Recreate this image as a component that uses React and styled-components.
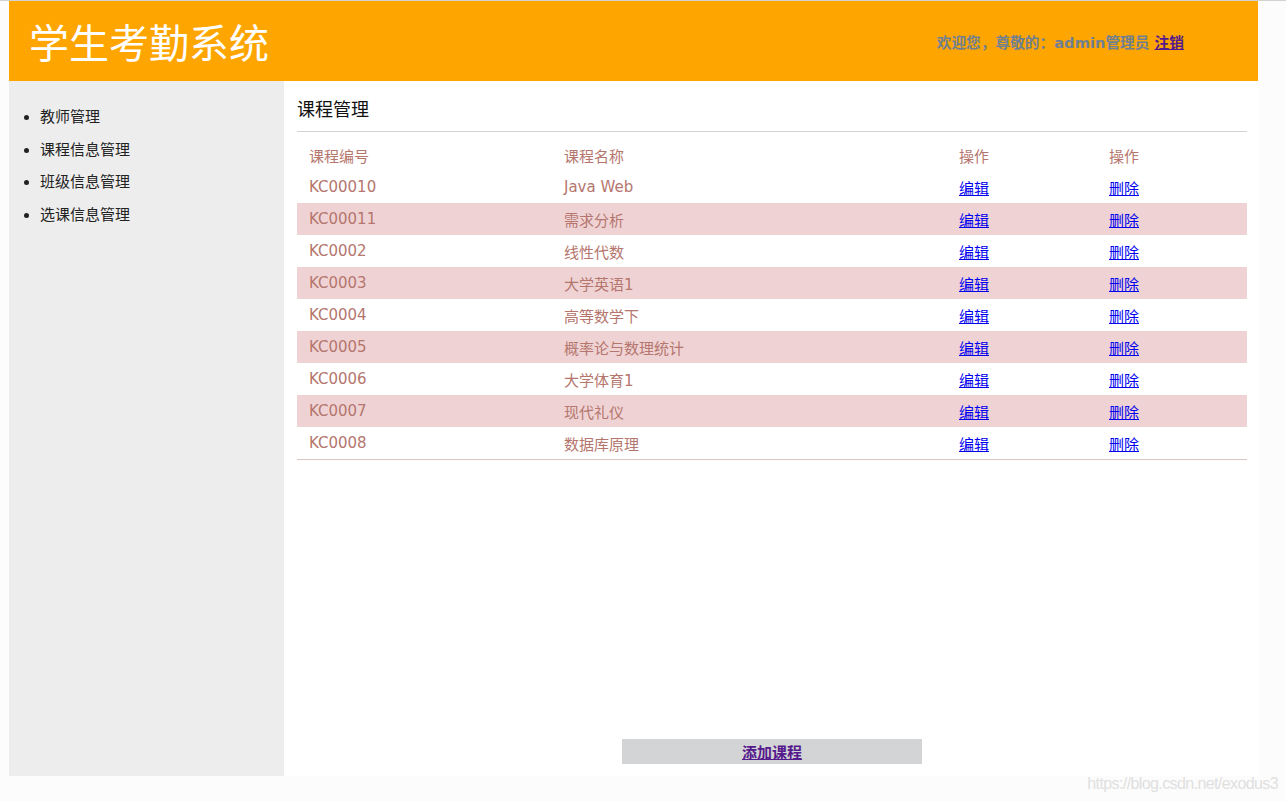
import React from 'react';
import styled, { createGlobalStyle } from 'styled-components';

const courses = [
  ['KC00010', 'Java Web'],
  ['KC00011', '需求分析'],
  ['KC0002', '线性代数'],
  ['KC0003', '大学英语1'],
  ['KC0004', '高等数学下'],
  ['KC0005', '概率论与数理统计'],
  ['KC0006', '大学体育1'],
  ['KC0007', '现代礼仪'],
  ['KC0008', '数据库原理'],
];

const menu = ['教师管理', '课程信息管理', '班级信息管理', '选课信息管理'];

const App = () => {
  return (
    <>
      <GlobalStyle />
      <Page>
        <Header>
          <Title>学生考勤系统</Title>
          <Welcome>
            欢迎您，尊敬的：admin管理员 <VisitedLink href="#">注销</VisitedLink>
          </Welcome>
        </Header>
        <Body>
          <Sidebar>
            <Menu>
              {menu.map((m) => (
                <MenuItem key={m}>{m}</MenuItem>
              ))}
            </Menu>
          </Sidebar>
          <Main>
            <PageTitle>课程管理</PageTitle>
            <Table>
              <colgroup>
                <col style={{ width: 255 }} />
                <col style={{ width: 395 }} />
                <col style={{ width: 150 }} />
                <col style={{ width: 150 }} />
              </colgroup>
              <thead>
                <tr>
                  <Th>课程编号</Th>
                  <Th>课程名称</Th>
                  <Th>操作</Th>
                  <Th>操作</Th>
                </tr>
              </thead>
              <tbody>
                {courses.map(([id, name], i) => (
                  <Row key={id} $striped={i % 2 === 1}>
                    <Td>{id}</Td>
                    <Td>{name}</Td>
                    <Td><ActionLink href="#">编辑</ActionLink></Td>
                    <Td><ActionLink href="#">删除</ActionLink></Td>
                  </Row>
                ))}
              </tbody>
            </Table>
            <Footer>
              <AddButton>
                <VisitedLink href="#">添加课程</VisitedLink>
              </AddButton>
            </Footer>
          </Main>
        </Body>
      </Page>
      <Watermark>https://blog.csdn.net/exodus3</Watermark>
    </>
  );
};

export default App;

const GlobalStyle = createGlobalStyle`
  html, body {
    margin: 0;
    padding: 0;
    background: #fcfcfc;
  }
  body {
    border-top: 1px solid #d2d2d2;
    font-family: "DejaVu Sans", "Noto Sans CJK SC", sans-serif;
    min-height: 800px;
    position: relative;
  }
`;

const Page = styled.div`
  width: 1249px;
  margin-left: 9px;
`;

const Header = styled.div`
  height: 80px;
  background: #ffa500;
  display: flex;
  align-items: center;
  justify-content: space-between;
  padding: 0 74px 0 20px;
  box-sizing: border-box;
`;

const Title = styled.h1`
  margin: 0;
  font-family: "Noto Sans CJK SC", sans-serif;
  font-weight: 400;
  font-size: 40px;
  line-height: 1;
  color: #fff;
`;

const Welcome = styled.div`
  font-size: 14.7px;
  font-weight: bold;
  color: #708090;
  margin-top: 1px;
`;

const VisitedLink = styled.a`
  color: #551a8b;
  text-decoration: underline;
  font-weight: bold;
`;

const Body = styled.div`
  display: flex;
  height: 695px;
`;

const Sidebar = styled.div`
  flex: 0 0 275px;
  background: #ededed;
`;

const Menu = styled.ul`
  margin: 0;
  padding: 20px 0 0 31px;
`;

const MenuItem = styled.li`
  font-size: 15px;
  line-height: 32.5px;
  color: #222;
`;

const Main = styled.div`
  flex: 1;
  min-width: 0;
  background: #fff;
  padding: 0 11px 0 13px;
  display: flex;
  flex-direction: column;
`;

const PageTitle = styled.h2`
  margin: 0;
  padding-top: 15px;
  height: 35px;
  font-family: "Noto Sans CJK SC", sans-serif;
  font-weight: 400;
  font-size: 18px;
  line-height: 24px;
  color: #111;
  border-bottom: 1px solid #d3d3d3;
`;

const Table = styled.table`
  margin-top: 7px;
  width: 950px;
  border-collapse: collapse;
  table-layout: fixed;
  border-bottom: 1px solid #ddc4c4;
`;

const Th = styled.th`
  text-align: left;
  font-weight: 400;
  font-size: 15px;
  color: #b5766e;
  height: 32px;
  padding: 0 12px;
`;

const Row = styled.tr`
  background: ${(p) => (p.$striped ? '#efd3d4' : 'transparent')};
`;

const Td = styled.td`
  height: 32px;
  padding: 0 12px;
  font-size: 15px;
  color: #b5766e;
`;

const ActionLink = styled.a`
  color: #0000ee;
  text-decoration: underline;
`;

const Footer = styled.div`
  margin-top: auto;
  display: flex;
  justify-content: center;
  padding-bottom: 12px;
`;

const AddButton = styled.div`
  width: 300px;
  height: 25px;
  background: #d3d4d6;
  display: flex;
  align-items: center;
  justify-content: center;
  font-size: 15px;
`;

const Watermark = styled.div`
  position: absolute;
  right: 8px;
  bottom: 8px;
  font-family: "Liberation Sans", sans-serif;
  font-size: 16px;
  letter-spacing: -0.6px;
  color: #e0e0e0;
`;
